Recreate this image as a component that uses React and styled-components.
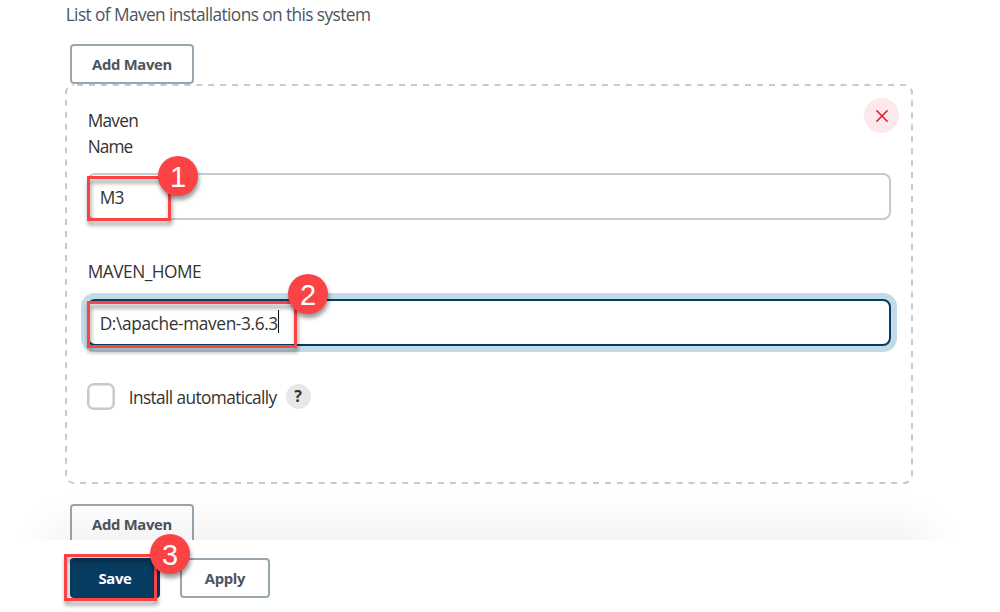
import React from "react";
import styled, { createGlobalStyle } from "styled-components";

const GlobalStyle = createGlobalStyle`
  * { box-sizing: border-box; }
  body {
    margin: 0;
    background: #fff;
    font-family: "Open Sans", "Noto Sans", sans-serif;
    color: #333;
  }
`;

const Page = styled.div`
  display: flex;
  flex-direction: column;
  width: 1000px;
  height: 612px;
  overflow: hidden;
`;

const Content = styled.main`
  position: relative;
  flex: none;
  display: flex;
  flex-direction: column;
  align-items: flex-start;
  height: 540px;
  padding: 3px 0 0 65px;
  overflow: hidden;
`;

const Text = styled.span`
  padding-left: 0.7px;
  font-size: 17.3px;
  line-height: ${(p) => p.$line || 26}px;
  letter-spacing: ${(p) => p.$spacing || 0}px;
  color: ${(p) => p.$color || "#333"};
  white-space: nowrap;
`;

const Intro = styled.div`
  height: 24px;
  line-height: 24px;
  margin-bottom: 17px;
`;

const Button = styled.button`
  flex: none;
  width: ${(p) => p.$width}px;
  height: 40px;
  padding: 1px 0 0;
  border: 2px solid ${(p) => (p.$primary ? "#073c61" : "#98a6af")};
  border-radius: 4px;
  background: ${(p) => (p.$primary ? "#073c61" : "transparent")};
  color: ${(p) => (p.$primary ? "#fff" : "#4d545d")};
  font: 700 14.8px/35px "Open Sans", "Noto Sans", sans-serif;
  letter-spacing: -0.3px;
  text-align: center;
`;

const AddButton = styled(Button)`
  margin-left: 5px;
`;

const Frame = styled.section`
  position: relative;
  flex: none;
  width: 848px;
  height: 400px;
  margin-bottom: 20px;
`;

const DashedBorder = styled.svg`
  position: absolute;
  inset: 0;
`;

const FrameBody = styled.div`
  display: flex;
  flex-direction: column;
  padding: 24px 22px 0;
`;

const FrameTop = styled.div`
  display: flex;
  justify-content: space-between;
  height: 65px;
`;

const Label = styled.label`
  display: flex;
  flex-direction: column;
`;

const RemoveButton = styled.button`
  display: grid;
  place-items: center;
  width: 35px;
  height: 35px;
  margin: -10px -8px 0 0;
  padding: 0 0 0 1px;
  border: 0;
  border-radius: 50%;
  background: #fce9ec;
`;

const Field = styled.div`
  display: flex;
  align-items: center;
  width: 804px;
  height: 47px;
  padding: 2px 10px 0;
  border: 2px solid ${(p) => (p.$focused ? "#073c61" : "#c2cbd0")};
  border-radius: 8px;
  background: #fff;
  box-shadow: ${(p) => (p.$focused ? "0 0 0 6px #c3dae8" : "none")};
`;

const FieldLabelRow = styled.div`
  height: 79px;
  padding-top: 39px;
`;

const Caret = styled.span`
  width: 1px;
  height: 23px;
  margin-top: -4px;
  background: #111;
`;

const CheckRow = styled.div`
  display: flex;
  align-items: center;
  height: 27px;
  margin-top: 37px;
`;

const CheckLabel = styled.label`
  margin-right: 9px;
  padding-top: 2px;
`;

const Checkbox = styled.span`
  width: 28px;
  height: 27px;
  margin-right: 13px;
  border: 2px solid #c2cbd0;
  border-radius: 7px;
  box-shadow: inset 0 0 0 1px #dde2e5;
`;

const Help = styled.span`
  display: grid;
  place-items: center;
  width: 25px;
  height: 25px;
  border-radius: 50%;
  background: #e7e7e7;
  color: #333;
  font-size: 16px;
  font-weight: 700;
  line-height: 25px;
`;

const BarShadow = styled.div`
  position: absolute;
  left: 65px;
  top: 540px;
  width: 848px;
  height: 80px;
  box-shadow: 0 0 40px 17px rgba(0, 0, 0, 0.056);
`;

const ActionBar = styled.footer`
  display: flex;
  gap: 20px;
  padding: 18px 0 0 70px;
`;

const Highlight = styled.div`
  position: absolute;
  left: ${(p) => p.$x}px;
  top: ${(p) => p.$y}px;
  width: ${(p) => p.$w}px;
  height: ${(p) => p.$h}px;
  border: 3px solid #fb4245;
  filter: drop-shadow(1px 4px 2px rgba(0, 0, 0, 0.42));
`;

const Badge = styled.div`
  position: absolute;
  left: ${(p) => p.$x}px;
  top: ${(p) => p.$y}px;
  width: 40px;
  height: 40px;
  border-radius: 50%;
  background: #fb4245;
  box-shadow: 1px 4px 4px rgba(0, 0, 0, 0.4);
  color: #fff;
  font: 29px/42px "Liberation Sans", Arial, sans-serif;
  text-align: center;
`;

const callouts = [
  { n: 1, box: [87, 176, 84, 45], badge: [158, 156] },
  { n: 2, box: [87, 301, 210, 47], badge: [288, 274] },
  { n: 3, box: [64, 554, 93, 47], badge: [150, 534] },
];

export default function App() {
  return (
    <>
      <GlobalStyle />
      <Page>
        <Content>
          <Intro>
            <Text $line={24} $spacing={-0.59} $color="#4d545d">
              List of Maven installations on this system
            </Text>
          </Intro>
          <AddButton $width={124}>Add Maven</AddButton>
          <Frame>
            <DashedBorder width="848" height="400" fill="none">
              <rect
                x="1" y="1" width="846" height="398" rx="8"
                stroke="#c2cbd0" strokeWidth="2"
                strokeDasharray="6 5.93" strokeDashoffset="-3"
              />
            </DashedBorder>
            <FrameBody>
              <FrameTop>
                <Label>
                  <Text $spacing={-0.75}>Maven</Text>
                  <Text $spacing={-0.9}>Name</Text>
                </Label>
                <RemoveButton aria-label="Remove">
                  <svg width="12" height="12" viewBox="0 0 12 12" stroke="#e1142f" strokeWidth="1.5" strokeLinecap="round">
                    <path d="M.8.8l10.4 10.4M11.2.8L.8 11.2" />
                  </svg>
                </RemoveButton>
              </FrameTop>
              <Field>
                <Text $spacing={-0.7}>M3</Text>
              </Field>
              <FieldLabelRow>
                <Text $spacing={-0.48}>MAVEN_HOME</Text>
              </FieldLabelRow>
              <Field $focused>
                <Text $spacing={-0.38}>D:\apache-maven-3.6.3</Text>
                <Caret />
              </Field>
              <CheckRow>
                <Checkbox />
                <CheckLabel>
                  <Text $spacing={-0.61}>Install automatically</Text>
                </CheckLabel>
                <Help>?</Help>
              </CheckRow>
            </FrameBody>
          </Frame>
          <AddButton $width={124}>Add Maven</AddButton>
          <BarShadow />
        </Content>
        <ActionBar>
          <Button $primary $width={90}>Save</Button>
          <Button $width={90}>Apply</Button>
        </ActionBar>
      </Page>
      {callouts.map(({ n, box, badge }) => (
        <React.Fragment key={n}>
          <Highlight $x={box[0]} $y={box[1]} $w={box[2]} $h={box[3]} />
          <Badge $x={badge[0]} $y={badge[1]}>{n}</Badge>
        </React.Fragment>
      ))}
    </>
  );
}
